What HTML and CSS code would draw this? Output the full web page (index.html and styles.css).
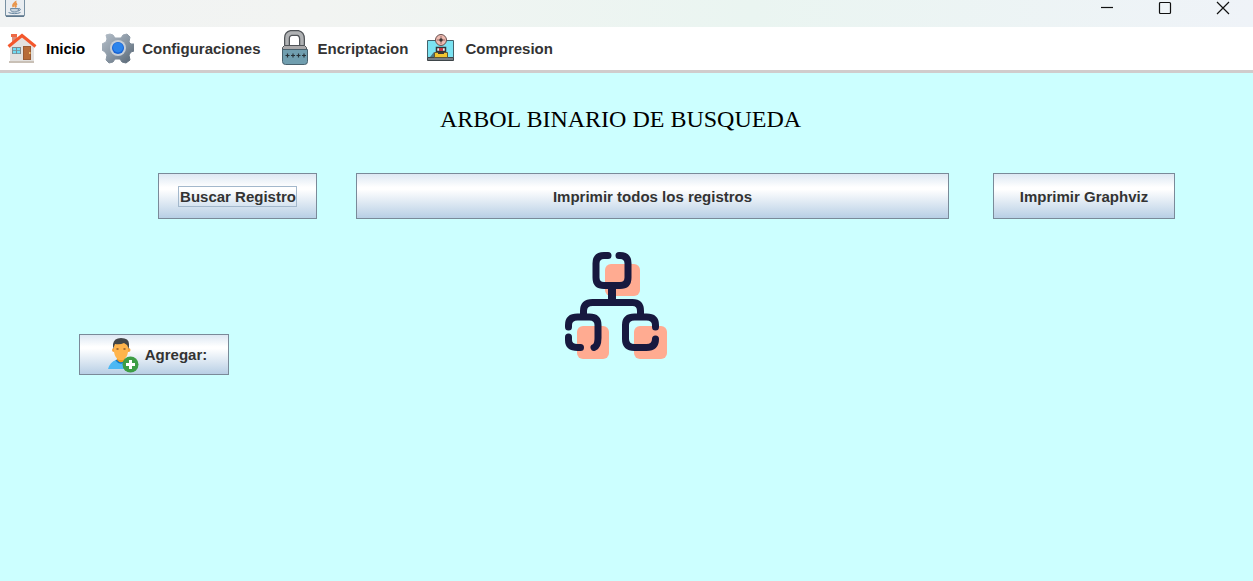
FILE: index.html
```
<!DOCTYPE html>
<html lang="es">
<head>
<meta charset="utf-8">
<title>Arbol binario de busqueda</title>
<link rel="stylesheet" href="styles.css">
</head>
<body>
<header class="titlebar">
  <svg class="app-icon" viewBox="0 0 20 18" aria-hidden="true">
    <rect x="0.5" y="-3.500" width="19" height="20" rx="1.500" fill="#e9edf1" stroke="#7890a2"/>
    <path d="M1 16h18" stroke="#567187" stroke-width="1.500"/>
    <path d="M10.500 1c1 2-4 3-2 6M12 3.500c-2 1-2 2-1 4" fill="none" stroke="#e8964e" stroke-width="2"/>
    <path d="M5.500 8.500h8c0 3-1.500 3.500-4 3.500s-4-.5-4-3.500zM13.500 8.500c3-.5 2 2.500-.5 2.500M3.500 12.500c3 1.500 9 1.500 12 0" fill="#c6d2dd" stroke="#6d8ba5"/>
  </svg>
  <div class="window-controls">
    <button class="window-button" aria-label="Minimizar"><svg viewBox="0 0 14 14"><path d="M1 6.500h12"/></svg></button>
    <button class="window-button" aria-label="Maximizar"><svg viewBox="0 0 14 14"><rect x="1.500" y="1.500" width="11" height="11" rx="1"/></svg></button>
    <button class="window-button" aria-label="Cerrar"><svg viewBox="0 0 14 14"><path d="M1 1l12 12M13 1L1 13"/></svg></button>
  </div>
</header>
<nav class="menu">
  <button class="menu-item menu-item-active">
    <svg class="icon" viewBox="0 0 32 36" aria-hidden="true">
      <path d="M6 5h5v8H6z" fill="#d98f7c"/><path d="M5 4h6v3H5z" fill="#ee6a45"/>
      <path d="M4 16L16 6l12 10v15H4z" fill="#e3e1df"/>
      <path d="M2.500 16.500L16 5.500l13.500 11" fill="none" stroke="#f4572c" stroke-width="3"/>
      <path d="M3 31h25v2H3z" fill="#c9c0b6"/>
      <path d="M17 16h8v14h-8z" fill="#9a5a32"/><path d="M18 17h6v12h-6z" fill="#b76b38"/><path d="M23 22h1.500v2H23z" fill="#f4c56c"/>
      <path d="M6 17h9v7H6z" fill="#7c8b91"/><path d="M7 18h3v2.200H7zM11 18h3v2.200h-3zM7 21h3v2.200H7zM11 21h3v2.200h-3z" fill="#70dcf4"/>
    </svg>
    Inicio
  </button>
  <button class="menu-item">
    <svg class="icon" viewBox="0 0 32 36" aria-hidden="true">
      <defs><linearGradient id="steel" x1="0" y1="0" x2="1" y2="1"><stop offset="0" stop-color="#b4bec8"/><stop offset=".5" stop-color="#8b98a5"/><stop offset="1" stop-color="#536270"/></linearGradient></defs>
      <path d="M8 4l3 1 2 3h6l2-3 4-1 3 3-1 5 2 2h3v7l-3 1-2 3 1 5-4 3-4-1-2-3h-5l-2 3-4 1-3-3 1-5-2-3-3-2v-6l4-2 1-3-1-4z" fill="url(#steel)" stroke="url(#steel)" stroke-linejoin="round"/>
      <circle cx="16" cy="18" r="8" fill="#c6ced7"/><circle cx="16" cy="18" r="6" fill="#1762d3"/><circle cx="16" cy="17.500" r="5" fill="#2c84ec"/>
    </svg>
    Configuraciones
  </button>
  <button class="menu-item">
    <svg class="icon" viewBox="0 0 32 36" aria-hidden="true">
      <path d="M9 17V8q0-4 4-5h7q4 1 4 6v8" fill="none" stroke="#505458" stroke-width="6"/>
      <path d="M9 17V8q0-4 4-5h7q4 1 4 6v8" fill="none" stroke="#b0b2b4" stroke-width="3.500"/>
      <path d="M6.500 15.500h20l2 2v3h-24v-3z" fill="#aaa9aa" stroke="#505458"/>
      <path d="M4.500 19.500h25v12q0 3-3 3h-19q-3 0-3-3z" fill="#709eaf" stroke="#48616d"/>
      <path d="M7.500 25.500h4M13 25.500h4M18.500 25.500h4M24 25.500h4M9.500 23.500v4M15 23.500v4M20.500 23.500v4M26 23.500v4" stroke="#283238" stroke-width="1.200"/>
    </svg>
    Encriptacion
  </button>
  <button class="menu-item">
    <svg class="icon" viewBox="0 0 32 36" aria-hidden="true">
      <path d="M2.500 10.500h26v17h-26z" fill="#7be3f2" stroke="#44636c"/>
      <path d="M2.500 27.500h26v3h-26z" fill="#777d83" stroke="#3e4549"/>
      <circle cx="16" cy="10" r="5.500" fill="#eebbb1" stroke="#68504e"/>
      <path d="M16 6v8M12 10h8" stroke="#966d68"/><circle cx="16" cy="10" r="1.700" fill="#3d3536"/>
      <path d="M11.500 17.500h9v4h-9z" fill="#eceff0" stroke="#303639" stroke-width="1.500"/><path d="M14 18h4v3h-4z" fill="#c63942"/>
      <path d="M9.500 22.500h13v5h-13z" fill="#f2c52f" stroke="#625733"/><path d="M13 22h6v2h-6z" fill="#393939"/>
      <path d="M5 27l4-5v5z" fill="#4f7780"/>
    </svg>
    Compresion
  </button>
</nav>
<main class="content">
  <h1 class="title">ARBOL BINARIO DE BUSQUEDA</h1>
  <div class="actions">
    <button class="button button-search"><span class="focus-ring">Buscar Registro</span></button>
    <button class="button button-print">Imprimir todos los registros</button>
    <button class="button button-graph">Imprimir Graphviz</button>
  </div>
  <div class="workspace">
    <button class="button button-add">
      <svg class="icon" viewBox="0 0 32 36" aria-hidden="true">
        <path d="M1 32q2-7 8-9h9q7 1 8 9z" fill="#4bb8f4"/>
        <path d="M10 20h8v4q-4 4-8 0z" fill="#f49a18"/><path d="M9 23q5 6 10 0" fill="none" stroke="#1677bd" stroke-width="1.500"/>
        <circle cx="7" cy="13" r="2" fill="#f5a23b"/><circle cx="21.500" cy="13" r="2" fill="#f5a23b"/>
        <path d="M7 5h14v10q-1 6-5 8h-4q-4-2-5-8z" fill="#ffb44c"/>
        <path d="M6 12V7q1-6 8-6 8 0 8 6v5l-2-4-3-2q-4 2-9 1z" fill="#424648"/>
        <path d="M9.500 12h2M16.500 12h2" stroke="#8c592a" stroke-width="1.500"/>
        <circle cx="23.500" cy="27.500" r="8" fill="#3d9d45"/><path d="M23.500 23v9M19 27.500h9" stroke="#fff" stroke-width="3"/>
      </svg>
      Agregar:
    </button>
    <svg class="tree" viewBox="0 0 102 108" role="img" aria-label="Arbol binario">
      <g fill="#ffab91"><rect x="40" y="12" width="35" height="32" rx="6"/><rect x="12" y="74" width="32" height="33" rx="6"/><rect x="69" y="74" width="33" height="33" rx="6"/></g>
      <g fill="none" stroke="#17193f" stroke-width="7" stroke-linecap="round" stroke-linejoin="round">
        <path d="M43 3.500h-4q-8 0-8 8v14q0 8 8 8h16q8 0 8-8v-14q0-8-8-8h-1"/>
        <path d="M47 34v16" stroke-width="8" stroke-linecap="butt"/>
        <path d="M18.500 64v-5q0-8.500 9-8.500h40q8 0 8 8.500v5" stroke-linecap="butt"/>
        <path d="M3.500 75v-2q0-8 9-8h12q8.500 0 8.500 8v13q0 8-4 9.500M3.500 85v3q0 7.500 9 7.500h3"/>
        <path d="M90.500 75v-2q0-8-9-8h-12q-9 0-9 8v14q0 8.500 9 8.500h12q9 0 9-8.500"/>
      </g>
    </svg>
    <div></div>
  </div>
</main>
</body>
</html>
```
FILE: styles.css
```
* { box-sizing: border-box; }

body {
  margin: 0;
  min-height: 100vh;
  display: flex;
  flex-direction: column;
  background: #ccffff;
  color: #333333;
  font-family: "Liberation Sans", Arial, sans-serif;
  font-size: 15px;
  font-weight: bold;
}

button {
  font: inherit;
  color: inherit;
  white-space: nowrap;
}

svg {
  display: block;
  flex: none;
}

.titlebar {
  display: flex;
  justify-content: space-between;
  align-items: flex-start;
  height: 27px;
  padding: 0 1px 0 5px;
  background: linear-gradient(90deg, #f1f3f3, #f2f4f2 25%, #eaf5f1 60%, #eff3f8);
}

.app-icon {
  width: 20px;
  height: 18px;
}

.window-controls { display: flex; }

.window-button {
  display: flex;
  justify-content: center;
  width: 58px;
  padding: 1px 0;
  border: 0;
  background: none;
}

.window-button svg {
  width: 14px;
  height: 14px;
  fill: none;
  stroke: #111111;
  stroke-width: 1.2;
}

.menu {
  display: flex;
  align-items: center;
  gap: 17px;
  padding: 3px 6px 4px;
  background: #ffffff;
  border-bottom: 3px solid #d0cccc;
}

.menu-item {
  display: flex;
  align-items: center;
  gap: 8px;
  padding: 0;
  border: 0;
  background: none;
}

.menu-item-active { color: #000000; }

.icon {
  width: 32px;
  height: 36px;
}

.content { flex: 1; }

.title {
  margin: 0;
  padding: 30px 12px 0 0;
  color: #000000;
  font-family: "Liberation Serif", "Times New Roman", serif;
  font-size: 24px;
  font-weight: normal;
  line-height: 32px;
  text-align: center;
}

.actions {
  display: flex;
  padding: 38px 78px 0 158px;
}

.button {
  display: flex;
  align-items: center;
  justify-content: center;
  gap: 6px;
  height: 46px;
  padding: 0;
  border: 1px solid #7a8a99;
  background: linear-gradient(#dde8f3, #ffffff 30%, #ffffff 35%, #b8cfe5);
}

.button-search { width: 159px; }

.button-print {
  flex: 1;
  margin: 0 44px 0 39px;
}

.button-graph { width: 182px; }

.focus-ring {
  padding: 1px 0 1px 1px;
  outline: 1px solid #a3b8cc;
}

.workspace {
  display: grid;
  grid-template-columns: 1fr auto 1fr;
  padding: 33px 100px 32px 79px;
}

.button-add {
  align-self: end;
  width: 150px;
  height: 41px;
  padding-left: 6px;
}

.tree {
  width: 102px;
  height: 108px;
  margin-bottom: 15px;
}
```
